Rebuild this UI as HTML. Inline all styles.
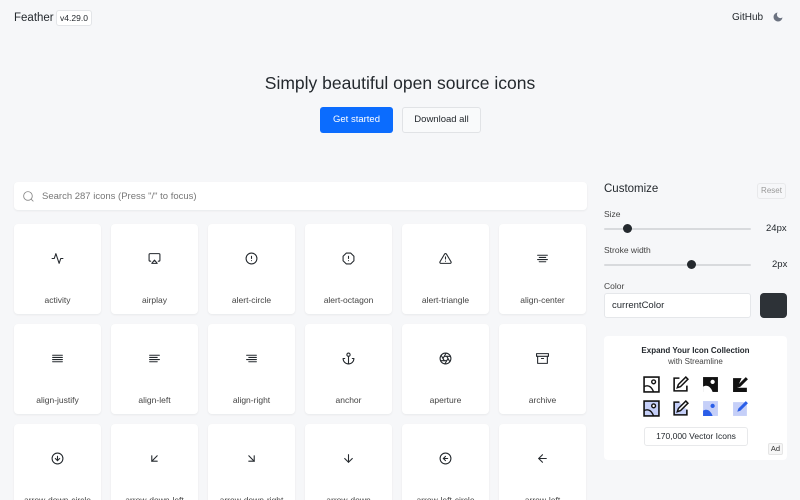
<!DOCTYPE html>
<html style="height:500px;overflow:hidden"><head><meta charset="utf-8"><style>
*{box-sizing:border-box;margin:0;padding:0}
body{width:800px;height:500px;overflow:hidden;background:#f6f7f9;font-family:"Liberation Sans",sans-serif;color:#24292e;position:relative}
.a{position:absolute}
.card{position:absolute;width:87px;height:90px;background:#fff;border-radius:4px;box-shadow:0 1px 2px rgba(0,0,0,.06)}
.card svg{position:absolute;left:37px;top:28px;width:13px;height:13px;fill:none;stroke:#24292e;stroke-width:2;stroke-linecap:round;stroke-linejoin:round}
.card span{position:absolute;left:0;right:0;top:71px;text-align:center;font-size:8.5px;color:#444}
.track{position:absolute;height:2px;background:#d8dadd;border-radius:1px}
.thumb{position:absolute;width:9px;height:9px;border-radius:50%;background:#24292e}
.si{position:absolute;width:17px;height:17px}
</style></head><body>
<div class="a" style="left:14px;top:12px;font-size:11.5px">Feather</div>
<div class="a" style="left:56px;top:10px;width:36px;height:16px;border:1px solid #e3e5e8;border-radius:3px;background:#fff;font-size:8.5px;text-align:center;line-height:14px">v4.29.0</div>
<div class="a" style="left:732px;top:12px;font-size:10px">GitHub</div>
<svg class="a" style="left:772px;top:11px" width="12" height="12" viewBox="0 0 24 24"><path d="M21 12.79A9 9 0 1 1 11.21 3 7 7 0 0 0 21 12.79z" fill="#6b7280"/></svg>
<div class="a" style="left:0;width:800px;top:73px;text-align:center;font-size:17.5px">Simply beautiful open source icons</div>
<div class="a" style="left:320px;top:107px;width:73px;height:26px;background:#0b6cfe;border-radius:3px;color:#fff;font-size:9.5px;text-align:center;line-height:26px">Get started</div>
<div class="a" style="left:402px;top:107px;width:79px;height:26px;background:#f9fafb;border:1px solid #e1e3e6;border-radius:3px;font-size:9.5px;text-align:center;line-height:24px">Download all</div>
<div class="a" style="left:14px;top:182px;width:573px;height:28px;background:#fff;border-radius:4px;box-shadow:0 1px 2px rgba(0,0,0,.06)"></div>
<svg class="a" style="left:22px;top:190px" width="13" height="13" viewBox="0 0 24 24" fill="none" stroke="#888" stroke-width="1.6"><circle cx="11" cy="11" r="8"/><line x1="21" y1="21" x2="16.65" y2="16.65"/></svg>
<div class="a" style="left:42px;top:191px;font-size:9.5px;color:#777">Search 287 icons (Press "/" to focus)</div>

<div class="card" style="left:14px;top:224px"><svg viewBox="0 0 24 24"><polyline points="22 12 18 12 15 21 9 3 6 12 2 12"/></svg><span>activity</span></div>
<div class="card" style="left:111px;top:224px"><svg viewBox="0 0 24 24"><path d="M5 17H4a2 2 0 0 1-2-2V5a2 2 0 0 1 2-2h16a2 2 0 0 1 2 2v10a2 2 0 0 1-2 2h-1"/><polygon points="12 15 17 21 7 21 12 15"/></svg><span>airplay</span></div>
<div class="card" style="left:208px;top:224px"><svg viewBox="0 0 24 24"><circle cx="12" cy="12" r="10"/><line x1="12" y1="8" x2="12" y2="12"/><line x1="12" y1="16" x2="12.01" y2="16"/></svg><span>alert-circle</span></div>
<div class="card" style="left:305px;top:224px"><svg viewBox="0 0 24 24"><polygon points="7.86 2 16.14 2 22 7.86 22 16.14 16.14 22 7.86 22 2 16.14 2 7.86"/><line x1="12" y1="8" x2="12" y2="12"/><line x1="12" y1="16" x2="12.01" y2="16"/></svg><span>alert-octagon</span></div>
<div class="card" style="left:402px;top:224px"><svg viewBox="0 0 24 24"><path d="M10.29 3.86L1.82 18a2 2 0 0 0 1.71 3h16.94a2 2 0 0 0 1.71-3L13.71 3.86a2 2 0 0 0-3.42 0z"/><line x1="12" y1="9" x2="12" y2="13"/><line x1="12" y1="17" x2="12.01" y2="17"/></svg><span>alert-triangle</span></div>
<div class="card" style="left:499px;top:224px"><svg viewBox="0 0 24 24"><line x1="18" y1="10" x2="6" y2="10"/><line x1="21" y1="6" x2="3" y2="6"/><line x1="21" y1="14" x2="3" y2="14"/><line x1="18" y1="18" x2="6" y2="18"/></svg><span>align-center</span></div>

<div class="card" style="left:14px;top:324px"><svg viewBox="0 0 24 24"><line x1="21" y1="10" x2="3" y2="10"/><line x1="21" y1="6" x2="3" y2="6"/><line x1="21" y1="14" x2="3" y2="14"/><line x1="21" y1="18" x2="3" y2="18"/></svg><span>align-justify</span></div>
<div class="card" style="left:111px;top:324px"><svg viewBox="0 0 24 24"><line x1="17" y1="10" x2="3" y2="10"/><line x1="21" y1="6" x2="3" y2="6"/><line x1="21" y1="14" x2="3" y2="14"/><line x1="17" y1="18" x2="3" y2="18"/></svg><span>align-left</span></div>
<div class="card" style="left:208px;top:324px"><svg viewBox="0 0 24 24"><line x1="21" y1="10" x2="7" y2="10"/><line x1="21" y1="6" x2="3" y2="6"/><line x1="21" y1="14" x2="3" y2="14"/><line x1="21" y1="18" x2="7" y2="18"/></svg><span>align-right</span></div>
<div class="card" style="left:305px;top:324px"><svg viewBox="0 0 24 24"><circle cx="12" cy="5" r="3"/><line x1="12" y1="22" x2="12" y2="8"/><path d="M5 12H2a10 10 0 0 0 20 0h-3"/></svg><span>anchor</span></div>
<div class="card" style="left:402px;top:324px"><svg viewBox="0 0 24 24"><circle cx="12" cy="12" r="10"/><line x1="14.31" y1="8" x2="20.05" y2="17.94"/><line x1="9.69" y1="8" x2="21.17" y2="8"/><line x1="7.38" y1="12" x2="13.12" y2="2.06"/><line x1="9.69" y1="16" x2="3.95" y2="6.06"/><line x1="14.31" y1="16" x2="2.83" y2="16"/><line x1="16.62" y1="12" x2="10.88" y2="21.94"/></svg><span>aperture</span></div>
<div class="card" style="left:499px;top:324px"><svg viewBox="0 0 24 24"><polyline points="21 8 21 21 3 21 3 8"/><rect x="1" y="3" width="22" height="5"/><line x1="10" y1="12" x2="14" y2="12"/></svg><span>archive</span></div>

<div class="card" style="left:14px;top:424px"><svg viewBox="0 0 24 24"><circle cx="12" cy="12" r="10"/><polyline points="8 12 12 16 16 12"/><line x1="12" y1="8" x2="12" y2="16"/></svg><span>arrow-down-circle</span></div>
<div class="card" style="left:111px;top:424px"><svg viewBox="0 0 24 24"><line x1="17" y1="7" x2="7" y2="17"/><polyline points="17 17 7 17 7 7"/></svg><span>arrow-down-left</span></div>
<div class="card" style="left:208px;top:424px"><svg viewBox="0 0 24 24"><line x1="7" y1="7" x2="17" y2="17"/><polyline points="17 7 17 17 7 17"/></svg><span>arrow-down-right</span></div>
<div class="card" style="left:305px;top:424px"><svg viewBox="0 0 24 24"><line x1="12" y1="5" x2="12" y2="19"/><polyline points="19 12 12 19 5 12"/></svg><span>arrow-down</span></div>
<div class="card" style="left:402px;top:424px"><svg viewBox="0 0 24 24"><circle cx="12" cy="12" r="10"/><polyline points="12 8 8 12 12 16"/><line x1="16" y1="12" x2="8" y2="12"/></svg><span>arrow-left-circle</span></div>
<div class="card" style="left:499px;top:424px"><svg viewBox="0 0 24 24"><line x1="19" y1="12" x2="5" y2="12"/><polyline points="12 19 5 12 12 5"/></svg><span>arrow-left</span></div>

<div class="a" style="left:604px;top:183px;font-size:11.5px;font-weight:500">Customize</div>
<div class="a" style="left:757px;top:183px;width:29px;height:16px;border:1px solid #e8e9eb;border-radius:3px;font-size:8px;color:#999;text-align:center;line-height:14px">Reset</div>
<div class="a" style="left:604px;top:209px;font-size:8.5px;color:#444">Size</div>
<div class="track" style="left:604px;top:228px;width:147px"></div>
<div class="thumb" style="left:623px;top:224px"></div>
<div class="a" style="left:766px;top:223px;font-size:9.5px">24px</div>
<div class="a" style="left:604px;top:245px;font-size:8.5px;color:#444">Stroke width</div>
<div class="track" style="left:604px;top:264px;width:147px"></div>
<div class="thumb" style="left:687px;top:260px"></div>
<div class="a" style="left:772px;top:259px;font-size:9.5px">2px</div>
<div class="a" style="left:604px;top:281px;font-size:8.5px;color:#444">Color</div>
<div class="a" style="left:604px;top:293px;width:147px;height:25px;background:#fff;border:1px solid #e5e7ea;border-radius:3px;font-size:9.5px;line-height:23px;padding-left:7px">currentColor</div>
<div class="a" style="left:760px;top:293px;width:27px;height:25px;background:#2d3237;border-radius:4px"></div>

<div class="a" style="left:604px;top:336px;width:183px;height:124px;background:#fff;border-radius:4px"></div>
<div class="a" style="left:604px;width:183px;top:346px;text-align:center;font-size:8px;font-weight:bold">Expand Your Icon Collection</div>
<div class="a" style="left:604px;width:183px;top:357px;text-align:center;font-size:8px;color:#444">with Streamline</div>
<svg class="si" style="left:643px;top:376px" viewBox="0 0 16 16"><rect x="1" y="1" width="14" height="14" fill="none" stroke="#111" stroke-width="1.5"/><circle cx="10" cy="5.5" r="1.8" fill="none" stroke="#111" stroke-width="1.3"/><path d="M1 10c4-2 7 0 9 5" fill="none" stroke="#111" stroke-width="1.3"/></svg>
<svg class="si" style="left:672px;top:376px" viewBox="0 0 16 16"><path d="M7 2H2v12h12V9" fill="none" stroke="#111" stroke-width="1.5"/><path d="M13 1l2 2-7 7-3 1 1-3z" fill="none" stroke="#111" stroke-width="1.4"/></svg>
<svg class="si" style="left:702px;top:376px" viewBox="0 0 16 16"><rect x="1" y="1" width="14" height="14" fill="#111"/><circle cx="10" cy="5.5" r="2" fill="#fff"/><path d="M1 10c4-2 7 0 9 5H1z" fill="#fff"/></svg>
<svg class="si" style="left:732px;top:376px" viewBox="0 0 16 16"><path d="M1 2h8l-4 9h9v4H1z" fill="#111"/><path d="M13 1l2 2-7 7-3 1 1-3z" fill="#111"/></svg>
<svg class="si" style="left:643px;top:400px" viewBox="0 0 16 16"><rect x="1" y="1" width="14" height="14" fill="#c5cff8" stroke="#111" stroke-width="1.5"/><circle cx="10" cy="5.5" r="1.8" fill="#fff" stroke="#111" stroke-width="1.3"/><path d="M1 10c4-2 7 0 9 5" fill="none" stroke="#111" stroke-width="1.3"/></svg>
<svg class="si" style="left:672px;top:400px" viewBox="0 0 16 16"><path d="M7 2H2v12h12V9" fill="#c5cff8" stroke="#111" stroke-width="1.5"/><path d="M13 1l2 2-7 7-3 1 1-3z" fill="#fff" stroke="#111" stroke-width="1.4"/></svg>
<svg class="si" style="left:702px;top:400px" viewBox="0 0 16 16"><rect x="1" y="1" width="14" height="14" fill="#c5cff8"/><circle cx="10" cy="5.5" r="2" fill="#2a5ee8"/><path d="M1 10c4-2 7 0 9 5H1z" fill="#2a5ee8"/></svg>
<svg class="si" style="left:732px;top:400px" viewBox="0 0 16 16"><rect x="1" y="2" width="13" height="13" fill="#c5cff8"/><path d="M13 1l2 2-7 7-3 1 1-3z" fill="#2a5ee8"/></svg>
<div class="a" style="left:644px;top:427px;width:104px;height:19px;border:1px solid #e8e9eb;border-radius:3px;font-size:8.5px;text-align:center;line-height:17px;background:#fff">170,000 Vector Icons</div>
<div class="a" style="left:768px;top:443px;width:15px;height:12px;border:1px solid #e5e5e5;border-radius:2px;font-size:7.5px;text-align:center;line-height:10px;color:#333;background:#f6f6f6">Ad</div>
</body></html>
